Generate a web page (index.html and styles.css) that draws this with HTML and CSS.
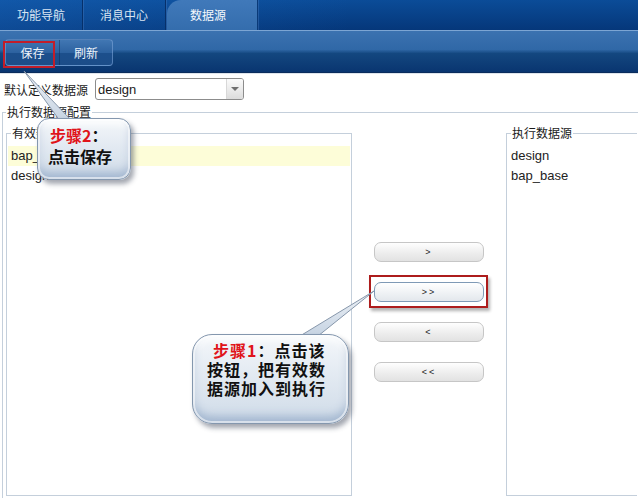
FILE: index.html
```html
<!DOCTYPE html>
<html lang="zh-CN">
<head>
<meta charset="utf-8">
<title>数据源</title>
<link rel="stylesheet" href="styles.css">
</head>
<body>
<div class="tabbar">
  <div class="tab">功能导航</div>
  <div class="tab">消息中心</div>
  <div class="tab active">数据源</div>
</div>
<div class="toolbar">
  <div class="btngroup">
    <button class="tbtn save">保存</button>
    <button class="tbtn refresh">刷新</button>
  </div>
</div>
<div class="main">
  <div class="row-default">
    <span class="lbl">默认定义数据源</span>
    <div class="select"><span class="val">design</span><span class="arrow"></span></div>
  </div>
  <fieldset class="outer">
    <legend>执行数据源配置</legend>
    <div class="cols">
      <fieldset class="list">
        <legend>有效数据源</legend>
        <div class="item sel">bap_base</div>
        <div class="item">design</div>
      </fieldset>
      <div class="moves">
        <button class="mv">&gt;</button>
        <button class="mv hot">&gt;&gt;</button>
        <button class="mv">&lt;</button>
        <button class="mv">&lt;&lt;</button>
      </div>
      <fieldset class="list right">
        <legend>执行数据源</legend>
        <div class="item">design</div>
        <div class="item">bap_base</div>
      </fieldset>
    </div>
  </fieldset>
</div>

<svg class="tails" width="638" height="498" viewBox="0 0 638 498">
  <defs>
    <linearGradient id="tg" x1="0" y1="0" x2="0" y2="1">
      <stop offset="0" stop-color="#eef2f7"/>
      <stop offset="1" stop-color="#c6d3e2"/>
    </linearGradient>
  </defs>
  <polygon points="24,71 60,121 72,121" fill="url(#tg)" stroke="#8797ab" stroke-width="1"/>
  <polygon points="374,291 300,336 318,336" fill="url(#tg)" stroke="#8797ab" stroke-width="1"/>
</svg>

<div class="callout c2">
  <div><span class="red">步骤2</span>：</div>
  <div class="big">点击保存</div>
</div>
<div class="callout c1">
  <div class="first"><span class="red">步骤1</span>：点击该</div>
  <div>按钮，把有效数</div>
  <div>据源加入到执行</div>
</div>
</body>
</html>
```
FILE: styles.css
```css
html, body {
  margin: 0;
  padding: 0;
}
body {
  width: 638px;
  height: 498px;
  overflow: hidden;
  position: relative;
  background: #ffffff;
  font-family: "Noto Sans CJK SC", "Liberation Sans", sans-serif;
  font-size: 12px;
  color: #1a1a1a;
}

/* ---------- tab bar ---------- */
.tabbar {
  height: 30px;
  display: flex;
  background:
    linear-gradient(90deg, rgba(30, 110, 200, 0.35), rgba(0, 0, 0, 0) 55%),
    linear-gradient(#0b4c98, #05377a);
}
.tab {
  width: 83px;
  box-sizing: border-box;
  line-height: 30px;
  text-align: center;
  color: #dbe6f3;
  border-right: 1px solid #06306a;
  box-shadow: 1px 0 0 rgba(80, 130, 195, 0.35);
}
.tab.active {
  width: 91px;
  margin-left: 1px;
  padding-right: 8px;
  color: #f4f8fc;
  border-radius: 14px 0 0 0;
  border-right: 1px solid #0a3a78;
  background: linear-gradient(#4079ba, #346dad);
}

/* ---------- toolbar ---------- */
.toolbar {
  height: 43px;
  box-sizing: border-box;
  padding: 8px 0 0 5px;
  border-top: 1px solid #7ca5d3;
  border-bottom: 1px solid #0a2c5c;
  background: linear-gradient(#3b72b0 0%, #3068a7 45%, #13477f 55%, #093570 100%);
}
.btngroup {
  display: flex;
  width: 108px;
  height: 27px;
  box-sizing: border-box;
  border: 1px solid rgba(130, 170, 220, 0.55);
  border-radius: 4px;
  background: linear-gradient(#4177b3, #2d62a0 50%, #1c4f8c 52%, #1c4d89);
}
.tbtn {
  width: 53px;
  padding: 0;
  border: 0;
  background: none;
  color: #eef4fb;
  font-family: "Noto Sans CJK SC", sans-serif;
  font-size: 12px;
  line-height: 25px;
}
.tbtn.refresh {
  border-left: 1px solid rgba(10, 40, 80, 0.45);
}
.tbtn.save {
  position: relative;
}
.tbtn.save::after {
  content: "";
  position: absolute;
  left: -3px;
  top: 1px;
  width: 52px;
  height: 27px;
  box-sizing: border-box;
  border: 2px solid #c21d29;
}

/* ---------- main ---------- */
.main {
  border-top: 1px solid #dde4ec;
  padding-top: 4px;
}
.row-default {
  display: flex;
  align-items: center;
  height: 22px;
  margin-left: 4px;
}
.lbl {
  width: 91px;
}
.select {
  width: 149px;
  height: 22px;
  box-sizing: border-box;
  border: 1px solid #8c8c8c;
  border-radius: 3px;
  display: flex;
  align-items: center;
  justify-content: space-between;
  background: #fff;
}
.val {
  padding-left: 2px;
  font-family: "Liberation Sans", sans-serif;
  font-size: 13px;
}
.arrow {
  width: 17px;
  height: 20px;
  box-sizing: border-box;
  border-left: 1px solid #d8d8d8;
  background: linear-gradient(#fbfbfb, #dcdcdc);
  border-radius: 0 2px 2px 0;
  position: relative;
}
.arrow::after {
  content: "";
  position: absolute;
  left: 4px;
  top: 8px;
  border-left: 4px solid transparent;
  border-right: 4px solid transparent;
  border-top: 4px solid #6f6f6f;
}

fieldset {
  margin: 0;
  min-width: 0;
}
legend {
  padding: 0 1px;
  line-height: 16px;
}
.outer {
  margin: 4px 0 0 2px;
  width: 636px;
  height: 394px;
  padding: 5px 0 0 3px;
  border: 1px solid #c4cfdb;
  border-right: 0;
  border-bottom: 0;
  box-sizing: border-box;
}
.outer > legend {
  margin-left: 0;
}
.cols {
  display: flex;
  align-items: flex-start;
}
.list {
  width: 346px;
  height: 371px;
  flex-shrink: 0;
  box-sizing: border-box;
  border: 1px solid #c4cfdb;
  padding: 5px 1px 0 1px;
}
.list.right {
  width: 131px;
  border-right: 0;
}
.list > legend {
  margin-left: 3px;
}
.item {
  height: 20px;
  line-height: 20px;
  padding-left: 3px;
  font-family: "Liberation Sans", sans-serif;
  font-size: 13px;
  color: #222;
}
.item.sel {
  background: #fdfdd8;
}

.moves {
  width: 154px;
  flex-shrink: 0;
  box-sizing: border-box;
  padding: 117px 0 0 22px;
  display: flex;
  flex-direction: column;
  align-items: flex-start;
  gap: 20px;
}
.mv {
  width: 110px;
  height: 20px;
  padding: 0;
  border: 1px solid #c6c6c6;
  border-radius: 7px;
  background: linear-gradient(#fefefe, #ececec 60%, #e2e2e2);
  font-family: "Liberation Sans", sans-serif;
  font-size: 9px;
  letter-spacing: 2px;
  color: #222;
}
.mv.hot {
  position: relative;
  border-color: #7f9ab6;
  background: linear-gradient(#ffffff, #eef1f4 60%, #e3e7ec);
}
.mv.hot::after {
  content: "";
  position: absolute;
  left: -6px;
  top: -8px;
  width: 119px;
  height: 33px;
  box-sizing: border-box;
  border: 2px solid #ad1c1c;
  box-shadow: 2px 3px 3px rgba(0, 0, 0, 0.3);
}

/* ---------- callouts ---------- */
.tails {
  position: absolute;
  left: 0;
  top: 0;
  z-index: 1;
  pointer-events: none;
}
.callout {
  position: absolute;
  z-index: 2;
  box-sizing: border-box;
  border: 1px solid #8497ae;
  background: linear-gradient(#f4f7fa 0%, #e3eaf2 45%, #cfdbe8 100%);
  box-shadow:
    inset 0 0 0 2px rgba(255, 255, 255, 0.55),
    inset 0 -7px 9px rgba(110, 140, 180, 0.45),
    inset 0 6px 6px rgba(255, 255, 255, 0.7),
    3px 4px 5px rgba(50, 60, 80, 0.45);
  font-weight: bold;
  font-size: 16px;
  color: #111;
}
.red {
  color: #e0141a;
}
.c2 {
  left: 37px;
  top: 118px;
  width: 94px;
  height: 62px;
  border-radius: 12px;
  padding: 6px 0 0 12px;
  line-height: 21px;
}
.c2 .big {
  margin-left: -2px;
}
.c1 {
  left: 192px;
  top: 334px;
  width: 157px;
  height: 90px;
  border-radius: 20px;
  padding: 6px 0 0 14px;
  line-height: 19px;
  letter-spacing: 1px;
}
.c1 .first {
  padding-left: 6px;
}
```
